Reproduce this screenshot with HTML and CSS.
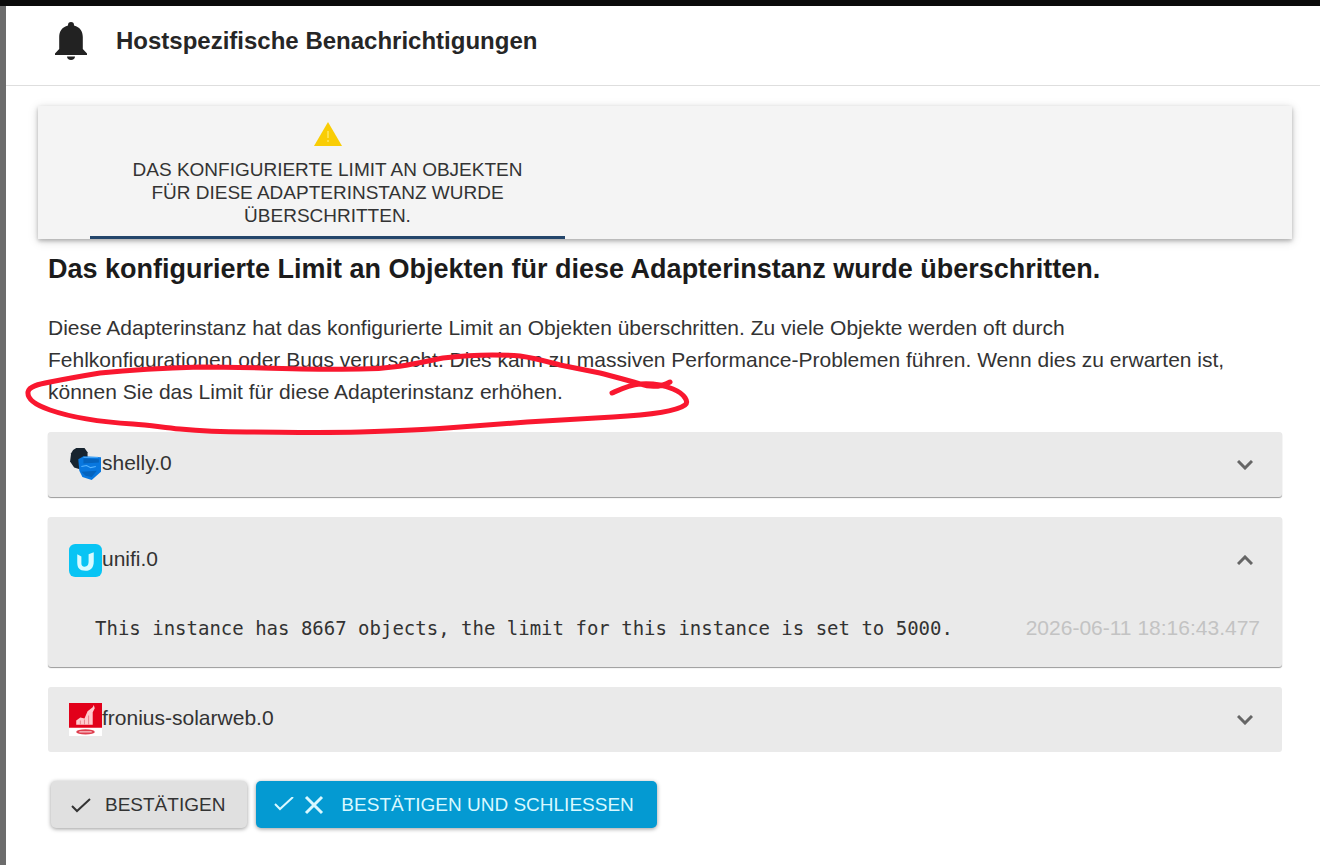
FILE: index.html
```html
<!DOCTYPE html>
<html lang="de">
<head>
    <meta charset="UTF-8">
    <meta name="viewport" content="width=device-width, initial-scale=1.0">
    <title>Hostspezifische Benachrichtigungen</title>
    <link rel="stylesheet" href="styles.css">
</head>
<body>
    <div class="dialog" role="dialog" aria-labelledby="dialogTitle">
        <header class="dialog-header">
            <svg class="bell" viewBox="0 0 32 38" aria-hidden="true">
                <path d="M16 0c-2 0-3 1.300-3 3v.5C7 5 4.200 9.500 4.200 15v12L0 31.500V33h32v-1.500L27.800 27V15c0-5.500-2.800-10-8.800-11.500V3c0-1.700-1-3-3-3z"/>
                <path d="M12 34.500h8c0 2-1.600 3.500-4 3.500s-4-1.500-4-3.500z"/>
            </svg>
            <h1 id="dialogTitle">Hostspezifische Benachrichtigungen</h1>
        </header>

        <main class="dialog-content">
            <div class="tabs" role="tablist">
                <button class="tab" role="tab" aria-selected="true" aria-controls="limitPanel" id="limitTab">
                    <svg class="warning" viewBox="0 0 28 24" aria-hidden="true">
                        <path fill="#f9cd05" d="M14 0l14 24H0z"/>
                        <path fill="#fde14a" d="M13 9h2v7h-2zM13 18h2v2h-2z"/>
                    </svg>
                    <span>Das konfigurierte Limit an Objekten für diese Adapterinstanz wurde überschritten.</span>
                </button>
            </div>

            <section class="panel" role="tabpanel" id="limitPanel" aria-labelledby="limitTab">
                <h2>Das konfigurierte Limit an Objekten für diese Adapterinstanz wurde überschritten.</h2>
                <div class="description">
                    <p>Diese Adapterinstanz hat das konfigurierte Limit an Objekten überschritten. Zu viele Objekte werden oft durch Fehlkonfigurationen oder Bugs verursacht. Dies kann zu massiven Performance-Problemen führen. Wenn dies zu erwarten ist, können Sie das Limit für diese Adapterinstanz erhöhen.</p>
                    <!-- rote Markierung -->
                    <svg class="marker" viewBox="20 350 680 90" aria-hidden="true">
                        <path d="M612 393C621 389 629 385 640 384C652 383 663 385 673 389C685 394 689 402 685 405C677 411 650 415 613 417L527 422L447 428C420 430 390 431 360 432C315 433 280 432 247 432C220 432 200 431 180 429C160 427 150 425 133 424C100 422 73 418 50 410C38 406 27 400 28 392C29 386 39 384 50 382C65 379 82 376 100 373C130 370 165 368 200 367C255 367 310 370 360 369C394 369 418 363 443 358C468 355 495 354 520 356C535 358 545 361 560 365L600 373C615 377 627 380 640 384C652 388 663 386 670 382"/>
                    </svg>
                </div>

                <div class="instances">
                    <details class="instance">
                        <summary>
                            <svg class="adapter-icon" viewBox="0 0 32 32" aria-hidden="true">
                                <path fill="#17242f" d="M4 2l3-2h8l3 4v12l-6 5-7-2-4-6 1-8z"/>
                                <path fill="#0877df" d="M9 11l5-3 17 1v14l-9 8-9-3-3-6z"/>
                                <path fill="#0563bd" d="M14 10l15 1v3l-15 1zM12 23l15-1-5 6-6-1z"/>
                                <path fill="none" stroke="#58b5ff" d="M12 18l5-1 4 2 5-1M14 9h14"/>
                            </svg>
                            <span class="instance-name">shelly.0</span>
                            <svg class="chevron" viewBox="0 0 16 10" aria-hidden="true"><path d="M1 1l7 7 7-7"/></svg>
                        </summary>
                    </details>
                    <details class="instance" open>
                        <summary>
                            <svg class="adapter-icon" viewBox="0 0 32 32" aria-hidden="true">
                                <rect width="32" height="32" rx="6" fill="#08c4f4"/>
                                <path fill="#d8faff" d="M8 10l4 2v7c0 2 1 3 3 3 3 0 4-2 4-5v-7l5-2v9c0 6-3 9-8 9-6 0-8-3-8-8z"/>
                            </svg>
                            <span class="instance-name">unifi.0</span>
                            <svg class="chevron" viewBox="0 0 16 10" aria-hidden="true"><path d="M1 1l7 7 7-7"/></svg>
                        </summary>
                        <div class="message">
                            <code>This instance has 8667 objects, the limit for this instance is set to 5000.</code>
                            <time datetime="2026-06-11T18:16:43.477">2026-06-11 18:16:43.477</time>
                        </div>
                    </details>
                    <details class="instance">
                        <summary>
                            <svg class="adapter-icon" viewBox="0 0 32 32" aria-hidden="true">
                                <path fill="#fff" d="M0 0h32v32H0z"/>
                                <path fill="#e2001a" d="M0 0h32v24H0z"/>
                                <path fill="#ffc9cd" d="M7 21v-4l4-3 4 1 3-7 5-4 1-2 1 3-2 4v12z"/>
                                <path stroke="#e98790" d="M11 17v4M15 16v5M19 12v9"/>
                                <ellipse cx="16" cy="28" rx="9" ry="2.500" fill="#df4050"/>
                                <path stroke="#ffe1e3" d="M10 28h12"/>
                            </svg>
                            <span class="instance-name">fronius-solarweb.0</span>
                            <svg class="chevron" viewBox="0 0 16 10" aria-hidden="true"><path d="M1 1l7 7 7-7"/></svg>
                        </summary>
                    </details>
                </div>
            </section>

            <div class="actions">
                <button class="btn" type="button">
                    <svg class="check" viewBox="0 0 20 16" aria-hidden="true"><path d="M1 9l5 5L19 2"/></svg>
                    <span>Bestätigen</span>
                </button>
                <button class="btn btn-primary" type="button">
                    <span class="btn-icons">
                        <svg class="check" viewBox="0 0 20 16" aria-hidden="true"><path d="M1 7l5 5L19 0"/></svg>
                        <svg class="close" viewBox="0 0 20 20" aria-hidden="true"><path d="M2 2l16 16M18 2L2 18"/></svg>
                    </span>
                    <span>Bestätigen und schliessen</span>
                </button>
            </div>
        </main>
    </div>
</body>
</html>
```

FILE: styles.css
```css
* {
    box-sizing: border-box;
}

body {
    margin: 0;
    min-height: 100vh;
    padding: 6px 0 0 6px;
    background: linear-gradient(#0b0b0b 6px, #6c6c6c 6px);
    font-family: "Liberation Sans", Arial, sans-serif;
    font-size: 21px;
    color: #333333;
    display: flex;
}

h1, h2, p {
    margin: 0;
}

button {
    font-family: inherit;
    color: inherit;
    border: none;
    cursor: pointer;
    text-transform: uppercase;
}

.dialog {
    flex: 1;
    background-color: #ffffff;
}

.dialog-header {
    display: flex;
    align-items: center;
    gap: 28px;
    height: 80px;
    padding: 0 48px 10px;
    border-bottom: 1px solid #dedede;
}

.dialog-header h1 {
    font-size: 24px;
    line-height: 32px;
    color: #262626;
}

.bell {
    width: 34px;
    height: 38px;
    fill: #222222;
}

.dialog-content {
    padding: 20px 28px 32px 32px;
}

.tabs {
    display: flex;
    padding: 0 52px;
    background-color: #f4f4f4;
    box-shadow: 0 2px 4px rgba(0, 0, 0, 0.25), 0 2px 10px rgba(0, 0, 0, 0.15);
}

.tab {
    display: flex;
    flex-direction: column;
    align-items: center;
    gap: 12px;
    width: 475px;
    padding: 16px 24px 9px;
    background: none;
    border-bottom: 3px solid #24466b;
    font-size: 19px;
    line-height: 23px;
    color: #333333;
}

.warning {
    width: 28px;
    height: 24px;
}

.panel {
    padding: 14px 10px 0;
}

.panel h2 {
    font-size: 27px;
    line-height: 32px;
    color: #1b1b1b;
}

.description {
    position: relative;
    margin-top: 27px;
    line-height: 32px;
}

.description p {
    padding-right: 40px;
}

.marker {
    position: absolute;
    top: 38px;
    left: -28px;
    width: 680px;
    height: 90px;
    fill: none;
    stroke: #f9172f;
    stroke-width: 5px;
    stroke-linecap: round;
    stroke-linejoin: round;
    pointer-events: none;
}

.instances {
    display: flex;
    flex-direction: column;
    gap: 20px;
    margin-top: 24px;
}

.instance {
    background-color: #eaeaea;
    border-radius: 3px;
    box-shadow: 0 1px 1px rgba(0, 0, 0, 0.4);
}

.instance:last-child {
    box-shadow: none;
}

.instance summary {
    display: flex;
    align-items: center;
    min-height: 65px;
    padding: 0 29px 0 21px;
    list-style: none;
    cursor: pointer;
}

.instance[open] summary {
    min-height: 86px;
}

.adapter-icon {
    width: 33px;
    height: 33px;
}

.instance-name {
    flex: 1;
    padding-bottom: 3px;
    line-height: 32px;
}

.chevron {
    width: 16px;
    height: 10px;
    fill: none;
    stroke: #666666;
    stroke-width: 3px;
}

.instance[open] .chevron {
    transform: rotate(180deg);
}

.message {
    display: flex;
    align-items: center;
    justify-content: space-between;
    padding: 9px 22px 23px 47px;
    line-height: 32px;
}

.message code {
    font-family: "DejaVu Sans Mono", monospace;
    font-size: 19px;
}

.message time {
    color: #c3c3c3;
}

.actions {
    display: flex;
    gap: 9px;
    padding: 29px 13px 0;
}

.btn {
    display: flex;
    align-items: center;
    gap: 14px;
    min-height: 47px;
    padding: 0 22px 0 20px;
    border-radius: 5px;
    background-color: #e0e0e0;
    box-shadow: 0 1px 4px rgba(0, 0, 0, 0.4);
    font-size: 19px;
}

.btn-primary {
    gap: 17px;
    padding: 0 23px 0 18px;
    background-color: #049ad2;
    color: #d9f8ff;
}

.btn-icons {
    display: flex;
    align-items: center;
    gap: 10px;
}

.check {
    width: 20px;
    height: 16px;
    fill: none;
    stroke: currentColor;
    stroke-width: 2px;
}

.close {
    width: 20px;
    height: 20px;
    fill: none;
    stroke: currentColor;
    stroke-width: 3px;
}
```
